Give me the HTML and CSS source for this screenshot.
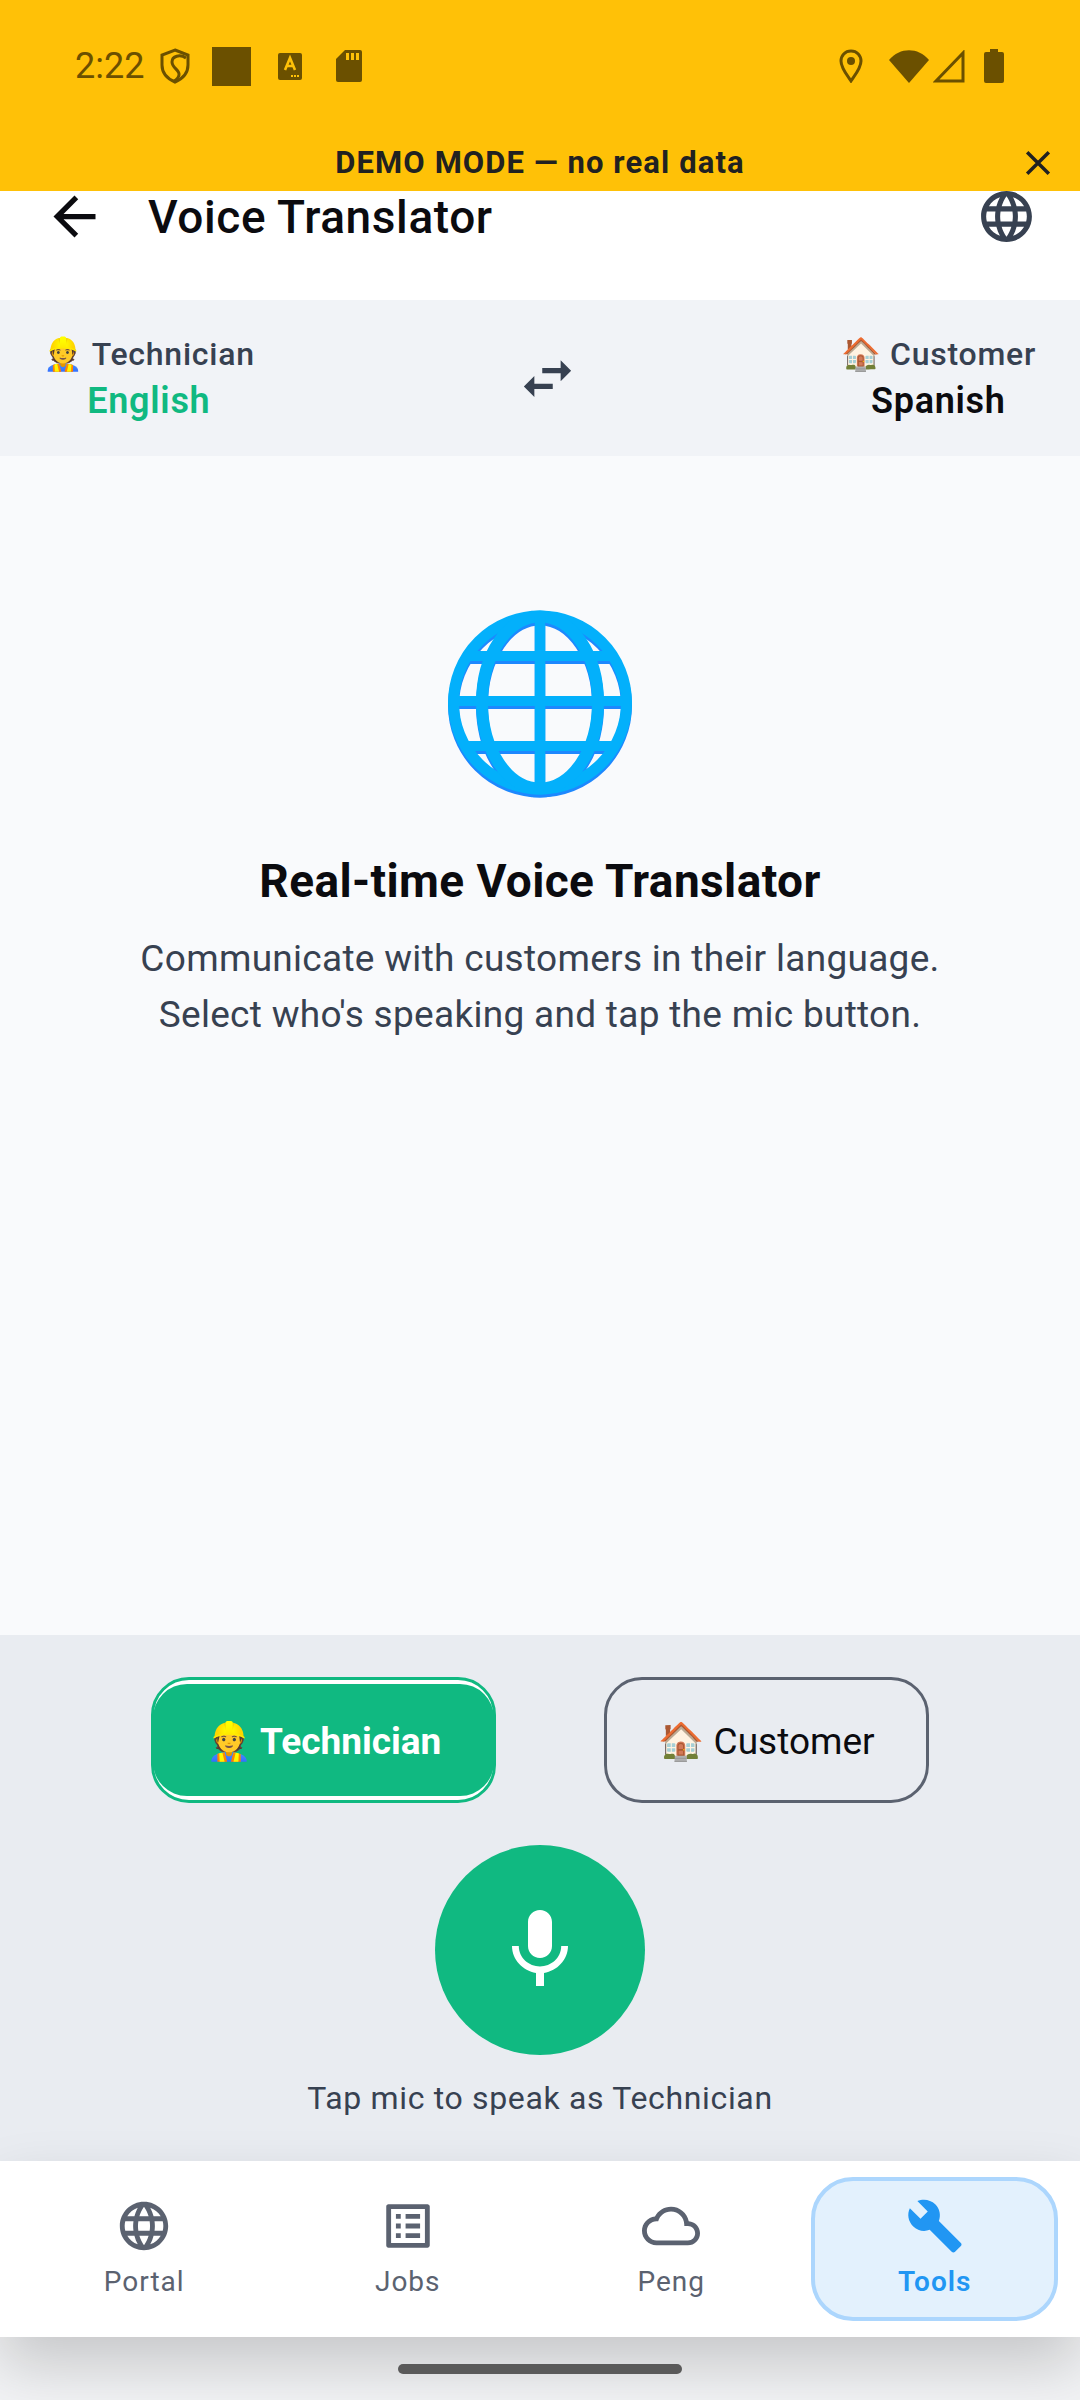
FILE: index.html
```html
<!DOCTYPE html>
<html>
<head>
<meta charset="utf-8">
<title>Voice Translator</title>
<link rel="stylesheet" href="styles.css">
</head>
<body>

<div class="top">
	<div class="status">
		<span class="time">2:22</span>
		<svg class="st-shield" viewBox="0 0 30 36"><path d="M15 2 L28 7 V17 C28 26 22 31 15 34 C8 31 2 26 2 17 V7 Z" fill="none" stroke="#6b5000" stroke-width="3"/><path d="M26 10 C20 6 12 8 12 14 C12 20 20 22 19 27 C18.500 30 16 32 14 33" fill="none" stroke="#6b5000" stroke-width="3"/></svg>
		<div class="st-block"></div>
		<svg class="st-a" viewBox="0 0 24 27"><rect width="24" height="27" rx="2" fill="#6b5000"/><path d="M7 17 L12 5 L17 17 M9 13 H15" fill="none" stroke="#ffc107" stroke-width="2.600"/><rect x="13" y="22" width="2" height="2" fill="#ffc107"/><rect x="16" y="22" width="2" height="2" fill="#ffc107"/><rect x="19" y="22" width="2" height="2" fill="#ffc107"/></svg>
		<svg class="st-sd" viewBox="0 0 26 32"><path d="M9 0 H24 Q26 0 26 2 V30 Q26 32 24 32 H2 Q0 32 0 30 V9 Z" fill="#6b5000"/><rect x="10" y="3" width="3" height="7" fill="#ffc107"/><rect x="15" y="3" width="3" height="7" fill="#ffc107"/><rect x="20" y="3" width="3" height="7" fill="#ffc107"/></svg>
		<div class="st-gap"></div>
		<svg class="st-pin" viewBox="0 0 24 34"><path d="M12 2 C6 2 2 6.500 2 12 C2 19 8 26 12 32 C16 26 22 19 22 12 C22 6.500 18 2 12 2 Z" fill="none" stroke="#6b5000" stroke-width="3"/><circle cx="12" cy="12" r="4" fill="#6b5000"/></svg>
		<svg class="st-wifi" viewBox="0 0 40 33"><path d="M0 10 C11 -3 29 -3 40 10 L20 33 Z" fill="#6b5000"/></svg>
		<svg class="st-signal" viewBox="0 0 32 33"><path d="M30 3 V31 H3 Z" fill="none" stroke="#6b5000" stroke-width="3"/></svg>
		<svg class="st-batt" viewBox="0 0 20 34"><path d="M6 0 H14 V3 H18 Q20 3 20 5 V32 Q20 34 18 34 H2 Q0 34 0 32 V5 Q0 3 2 3 H6 Z" fill="#6b5000"/></svg>
	</div>
	<div class="demo">
		<span>DEMO MODE — no real data</span>
		<svg class="demo-x" viewBox="0 0 24 24"><path d="M2 2 L22 22 M22 2 L2 22" stroke="#212121" stroke-width="3.200"/></svg>
	</div>
</div>

<div class="header">
	<svg class="back" viewBox="0 0 24 24"><path d="M20 11H7.830l5.590-5.590L12 4l-8 8 8 8 1.410-1.410L7.830 13H20v-2z" fill="#0b0b0f"/></svg>
	<div class="title">Voice Translator</div>
	<svg class="head-globe" viewBox="0 0 24 24"><path fill="#374151" d="M11.990 2C6.470 2 2 6.480 2 12s4.470 10 9.990 10C17.520 22 22 17.520 22 12S17.520 2 11.990 2zm6.930 6h-2.950c-.32-1.250-.78-2.450-1.380-3.560 1.840.63 3.370 1.910 4.330 3.560zM12 4.040c.83 1.200 1.480 2.530 1.910 3.960h-3.820c.43-1.430 1.080-2.760 1.910-3.960zM4.260 14C4.100 13.360 4 12.690 4 12s.1-1.360.26-2h3.380c-.08.66-.14 1.320-.14 2 0 .68.06 1.340.14 2H4.260zm.82 2h2.950c.32 1.250.78 2.450 1.380 3.560-1.840-.63-3.370-1.900-4.330-3.560zm2.950-8H5.080c.96-1.660 2.490-2.930 4.330-3.560C8.810 5.550 8.350 6.750 8.030 8zM12 19.960c-.83-1.200-1.480-2.530-1.910-3.960h3.820c-.43 1.430-1.080 2.760-1.910 3.960zM14.340 14H9.660c-.09-.66-.16-1.320-.16-2 0-.68.07-1.350.16-2h4.680c.09.65.16 1.320.16 2 0 .68-.07 1.340-.16 2zm.25 5.560c.6-1.110 1.060-2.310 1.380-3.560h2.950c-.96 1.650-2.490 2.930-4.330 3.560zM16.360 14c.08-.66.14-1.320.14-2 0-.68-.06-1.340-.14-2h3.380c.16.64.26 1.310.26 2s-.1 1.360-.26 2h-3.380z"/></svg>
</div>

<div class="langs">
	<div class="lang">
		<div class="lang-who">👷 Technician</div>
		<div class="lang-name green">English</div>
	</div>
	<svg class="swap" viewBox="0 0 24 24"><path d="M6.990 11L3 15l3.990 4v-3H14v-2H6.990v-3zM21 9l-3.990-4v3H10v2h7.010v3L21 9z" fill="#374151"/></svg>
	<div class="lang">
		<div class="lang-who">🏠 Customer</div>
		<div class="lang-name">Spanish</div>
	</div>
</div>

<div class="empty">
	<svg class="empty-icon" viewBox="0 0 184 184">
		<defs>
			<clipPath id="globe-clip"><circle cx="92" cy="90.500" r="90"/></clipPath>
			<g id="globe-lines" fill="none">
				<circle cx="92" cy="90.500" r="86.500" stroke-width="11"/>
				<ellipse cx="92" cy="90.500" rx="58" ry="86" stroke-width="12"/>
				<path d="M92 5 V176" stroke-width="10.500"/>
				<g clip-path="url(#globe-clip)"><path d="M0 44 H184 M0 89 H184 M0 134 H184" stroke-width="10"/></g>
			</g>
		</defs>
		<use href="#globe-lines" y="3" stroke="#1e88fe"/>
		<use href="#globe-lines" stroke="#03b0fb"/>
	</svg>
	<div class="empty-title">Real-time Voice Translator</div>
	<div class="empty-text">Communicate with customers in their language.<br>Select who's speaking and tap the mic button.</div>
</div>

<div class="panel">
	<div class="speakers">
		<div class="speaker on"><div class="speaker-in">👷 Technician</div></div>
		<div class="speaker"><div class="speaker-in">🏠 Customer</div></div>
	</div>
	<div class="mic">
		<svg viewBox="0 0 24 24"><path d="M12 14c1.660 0 3-1.340 3-3V5c0-1.660-1.340-3-3-3S9 3.340 9 5v6c0 1.660 1.340 3 3 3zm5.300-3c0 3-2.540 5.100-5.300 5.100S6.700 14 6.700 11H5c0 3.410 2.720 6.230 6 6.720V21h2v-3.280c3.280-.48 6-3.300 6-6.720h-1.700z" fill="#fff"/></svg>
	</div>
	<div class="hint">Tap mic to speak as Technician</div>
</div>

<div class="nav">
	<div class="tab">
		<svg viewBox="0 0 24 24"><path fill="#5b6270" d="M11.990 2C6.470 2 2 6.480 2 12s4.470 10 9.990 10C17.520 22 22 17.520 22 12S17.520 2 11.990 2zm6.930 6h-2.950c-.32-1.250-.78-2.450-1.380-3.560 1.840.63 3.370 1.910 4.330 3.560zM12 4.040c.83 1.200 1.480 2.530 1.910 3.960h-3.820c.43-1.430 1.080-2.760 1.910-3.960zM4.260 14C4.100 13.360 4 12.690 4 12s.1-1.360.26-2h3.380c-.08.66-.14 1.320-.14 2 0 .68.06 1.340.14 2H4.260zm.82 2h2.950c.32 1.250.78 2.450 1.380 3.560-1.840-.63-3.370-1.900-4.330-3.560zm2.950-8H5.080c.96-1.660 2.490-2.930 4.330-3.560C8.810 5.550 8.350 6.750 8.030 8zM12 19.960c-.83-1.200-1.480-2.530-1.910-3.960h3.820c-.43 1.430-1.080 2.760-1.910 3.960zM14.340 14H9.660c-.09-.66-.16-1.320-.16-2 0-.68.07-1.350.16-2h4.680c.09.65.16 1.320.16 2 0 .68-.07 1.340-.16 2zm.25 5.560c.6-1.110 1.060-2.310 1.380-3.560h2.950c-.96 1.650-2.490 2.930-4.330 3.560zM16.360 14c.08-.66.14-1.320.14-2 0-.68-.06-1.340-.14-2h3.380c.16.64.26 1.310.26 2s-.1 1.360-.26 2h-3.380z"/></svg>
		<span>Portal</span>
	</div>
	<div class="tab">
		<svg viewBox="0 0 24 24"><path fill="#5b6270" d="M19 5v14H5V5h14m1.100-2H3.900c-.5 0-.9.4-.9.9v16.200c0 .4.4.9.9.9h16.200c.4 0 .9-.5.9-.9V3.900c0-.5-.5-.9-.9-.9zM11 7h6v2h-6V7zm0 4h6v2h-6v-2zm0 4h6v2h-6v-2zM7 7h2v2H7zm0 4h2v2H7zm0 4h2v2H7z"/></svg>
		<span>Jobs</span>
	</div>
	<div class="tab">
		<svg viewBox="0 0 24 24"><path d="M19.350 10.040C18.670 6.590 15.640 4 12 4 9.110 4 6.600 5.640 5.350 8.040 2.340 8.360 0 10.910 0 14c0 3.310 2.690 6 6 6h13c2.760 0 5-2.240 5-5 0-2.640-2.050-4.780-4.650-4.960zM19 18H6c-2.210 0-4-1.790-4-4s1.790-4 4-4h.71C7.370 7.690 9.480 6 12 6c3.040 0 5.500 2.460 5.500 5.500v.5H19c1.660 0 3 1.340 3 3s-1.340 3-3 3z" fill="#5b6270"/></svg>
		<span>Peng</span>
	</div>
	<div class="tab active">
		<svg viewBox="0 0 24 24"><path d="M22.700 19l-9.100-9.100c.9-2.300.4-5-1.500-6.900-2-2-5-2.400-7.400-1.300L9 6 6 9 1.600 4.700C.4 7.100.9 10.100 2.900 12.100c1.900 1.900 4.600 2.400 6.900 1.500l9.100 9.100c.4.4 1 .4 1.400 0l2.300-2.300c.5-.4.5-1.100.1-1.400z" fill="#2196f3"/></svg>
		<span>Tools</span>
	</div>
</div>

<div class="foot"><div class="home-bar"></div></div>

</body>
</html>
```

FILE: styles.css
```css
html,body{margin:0;padding:0;}
body{width:1080px;height:2400px;overflow:hidden;display:flex;flex-direction:column;background:#f2f3f5;font-family:Roboto,sans-serif;}
svg{display:block;flex:none;}

.top{height:191px;background:#ffc107;flex:none;}
.status{height:132px;display:flex;align-items:center;padding:0 76px 0 75px;}
.time{font-size:36px;color:#6b5000;width:85px;}
.st-shield{width:30px;height:36px;}
.st-block{width:39px;height:39px;background:#6b5000;margin-left:22px;}
.st-a{width:24px;height:27px;margin-left:27px;}
.st-sd{width:26px;height:32px;margin-left:34px;}
.st-gap{flex:1;}
.st-pin{width:24px;height:34px;}
.st-wifi{width:40px;height:33px;margin-left:26px;}
.st-signal{width:32px;height:33px;margin-left:4px;}
.st-batt{width:20px;height:34px;margin-left:19px;}
.demo{height:59px;position:relative;display:flex;align-items:center;justify-content:center;font-size:31px;font-weight:700;letter-spacing:1.100px;color:#212121;padding-top:2px;box-sizing:border-box;}
.demo-x{position:absolute;right:29px;top:18px;width:26px;height:26px;}

.header{height:109px;flex:none;background:#fff;overflow:hidden;display:flex;align-items:flex-start;padding:0 43px 0 43px;}
.back{width:63px;height:63px;margin-top:-6px;}
.title{font-size:46px;font-weight:500;letter-spacing:.6px;color:#0b0b0f;margin-left:42px;line-height:52px;flex:1;}
.head-globe{width:61px;height:61px;margin-top:-5px;}

.langs{height:156px;flex:none;background:#f1f3f7;display:flex;align-items:center;justify-content:space-between;padding:0 44px 0 43px;box-sizing:border-box;}
.lang{text-align:center;}
.lang-who{font-size:32px;font-weight:500;letter-spacing:.75px;color:#374151;line-height:40px;padding-top:3px;}
.lang-name{font-size:36px;font-weight:600;letter-spacing:.7px;color:#0b0b0f;line-height:48px;margin-top:3px;}
.green{color:#10b981;}
.swap{width:63px;height:63px;}

.empty{flex:1;background:#f9fafc;display:flex;flex-direction:column;align-items:center;padding-top:156px;}
.empty-icon{width:184px;height:184px;overflow:visible;}
.empty-title{font-size:46px;font-weight:700;letter-spacing:.4px;color:#0b0b0f;margin-top:57px;line-height:56px;}
.empty-text{font-size:37px;letter-spacing:.3px;color:#374151;line-height:56px;text-align:center;margin-top:22px;}

.panel{height:526px;flex:none;box-sizing:border-box;background:#e9ecf1;display:flex;flex-direction:column;align-items:center;padding-top:42px;}
.speakers{display:flex;gap:108px;}
.speaker{width:325px;height:126px;box-sizing:border-box;border:3px solid #5b6270;border-radius:38px;display:flex;font-size:37px;font-weight:400;color:#0b0b0f;}
.speaker-in{flex:1;display:flex;align-items:center;justify-content:center;white-space:pre;padding-top:2px;}
.speaker.on{width:345px;border-color:#10b981;background:#fff;color:#fff;font-weight:700;}
.speaker.on .speaker-in{background:#10b981;border-radius:34px;margin:4px -1px;}
.mic{width:210px;height:210px;border-radius:50%;background:#10b981;margin-top:42px;display:flex;align-items:center;justify-content:center;}
.mic svg{width:96px;height:96px;}
.hint{font-size:32px;letter-spacing:.66px;color:#374151;line-height:40px;margin-top:23px;}

.nav{height:176px;flex:none;position:relative;background:#fff;box-sizing:border-box;display:flex;padding:16px 13px 16px 12.500px;box-shadow:0 28px 60px rgba(0,0,0,.18);}
.tab{flex:none;width:263.500px;display:flex;flex-direction:column;align-items:center;font-size:28px;letter-spacing:1px;color:#5b6270;box-sizing:border-box;border:4px solid transparent;border-radius:42px;padding-top:16px;}
.tab svg{width:58px;height:58px;}
.tab span{line-height:36px;margin-top:9px;}
.tab.active{width:247px;background:#e3f1fd;border-color:#acd6fd;color:#2196f3;font-weight:600;margin:0 8.250px;}

.foot{height:63px;flex:none;display:flex;justify-content:center;padding-top:27px;box-sizing:border-box;}
.home-bar{width:284px;height:10px;border-radius:5px;background:#5a5a5a;position:relative;}
```
